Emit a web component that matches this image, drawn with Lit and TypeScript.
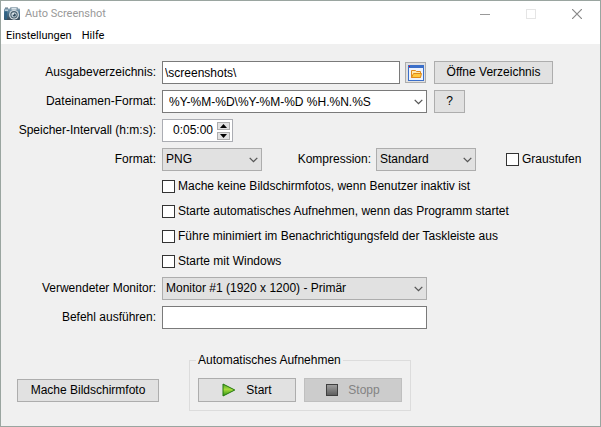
import { LitElement, html, css } from "lit";
import { customElement, state } from "lit/decorators.js";

const chevron = html`<svg class="chevron" width="9" height="6" viewBox="0 0 9 6" aria-hidden="true">
  <path d="M0.7 0.9 4.5 4.6 8.3 0.9" fill="none" stroke="#555" stroke-width="1.3" />
</svg>`;

const camera = html`<svg width="16" height="14" viewBox="0 0 16 14" aria-hidden="true">
  <defs>
    <linearGradient id="body" x1="0" y1="0" x2="0" y2="1">
      <stop offset="0" stop-color="#8fa9ba" />
      <stop offset="0.35" stop-color="#4c7691" />
      <stop offset="1" stop-color="#3a4b58" />
    </linearGradient>
  </defs>
  <rect x="1" y="0.5" width="3" height="2" fill="#5b6f7c" />
  <rect x="0" y="1.5" width="16" height="11.5" rx="0.8" fill="url(#body)" />
  <rect x="6" y="0.3" width="8" height="3" rx="0.8" fill="#8499a6" />
  <rect x="7.5" y="1" width="5" height="1.6" fill="#d9e4ea" />
  <rect x="1" y="2.6" width="3" height="1.4" fill="#b9cbd6" />
  <rect x="0.5" y="4.5" width="2.5" height="8" fill="#2f6285" />
  <circle cx="10" cy="7.8" r="4.9" fill="#d5dde2" />
  <circle cx="10" cy="7.8" r="3.7" fill="#49616f" />
  <circle cx="10" cy="7.8" r="2.6" fill="#c4d3dc" />
  <circle cx="10.3" cy="8" r="1.6" fill="#2e4a5c" />
  <circle cx="9.3" cy="7" r="0.8" fill="#fff" />
</svg>`;

const folder = html`<svg width="16" height="16" viewBox="0 0 16 16" aria-hidden="true">
  <rect width="16" height="16" fill="#3b6fc9" />
  <rect x="1" y="3" width="14" height="12" fill="#edf3fd" />
  <rect x="1" y="1" width="1" height="1" fill="#f00" />
  <path d="M3.5 12.5V5.5H7.5L8.5 6.5H12.5V12.5Z" fill="#ffe9ae" stroke="#e08a1c" />
  <path d="M3.5 12.5 5.5 8.5H13.5L12.5 12.5Z" fill="#ffc840" stroke="#e08a1c" />
</svg>`;

const play = html`<svg width="14" height="14" viewBox="0 0 14 14" aria-hidden="true">
  <defs>
    <linearGradient id="green" x1="0" y1="0" x2="0" y2="1">
      <stop offset="0" stop-color="#4fa52a" />
      <stop offset="0.45" stop-color="#a6dc3c" />
      <stop offset="1" stop-color="#2f9413" />
    </linearGradient>
  </defs>
  <path d="M1 1 12.8 7 1 13Z" fill="url(#green)" stroke="#23780f" />
</svg>`;

const stop = html`<svg width="12" height="12" viewBox="0 0 12 12" aria-hidden="true">
  <defs>
    <linearGradient id="grey" x1="0" y1="0" x2="0" y2="1">
      <stop offset="0" stop-color="#a0a0a0" />
      <stop offset="1" stop-color="#5c5c5c" />
    </linearGradient>
  </defs>
  <rect x="0.5" y="0.5" width="11" height="11" fill="url(#grey)" stroke="#3f3f3f" />
</svg>`;

@customElement("app-root")
export class AppRoot extends LitElement {
  @state() private minutes = 5;

  static styles = css`
    :host {
      display: block;
      font: 12px/15px "Liberation Sans", Arial, sans-serif;
      color: #000;
    }
    * {
      box-sizing: border-box;
    }
    .window {
      display: flex;
      flex-direction: column;
      min-height: 100vh;
      border: 1px solid #9aa5a0;
      background: #f0f0f0;
    }
    .titlebar {
      display: flex;
      align-items: center;
      height: 25px;
      padding-left: 3px;
      background: #fff;
      color: #999;
    }
    .title {
      flex: 1;
      margin: 0 0 0 5px;
      font: 11px/16px Roboto, "Open Sans", sans-serif;
    }
    .caption {
      display: grid;
      place-items: center;
      width: 46px;
      height: 25px;
      padding: 0;
      border: 0;
      background: none;
    }
    .menu {
      display: flex;
      gap: 10px;
      height: 18px;
      padding: 1px 0 0 5px;
      background: #fff;
    }
    .menu button {
      padding: 0;
      border: 0;
      background: none;
      color: #000;
      font: 11px/17px Roboto, "Open Sans", sans-serif;
    }
    .form {
      display: grid;
      grid-template-columns: 155px minmax(0, 1fr) 149px;
      align-items: center;
      gap: 6px;
      padding: 17px 18px 0 0;
    }
    .label {
      text-align: right;
    }
    .span {
      grid-column: 2 / 4;
    }
    .line {
      display: flex;
      align-items: center;
    }
    .path {
      gap: 5px;
      padding-right: 1px;
    }
    .path .text {
      flex: 1;
      min-width: 0;
      padding: 0 2px;
    }
    .text,
    select,
    .button {
      height: 23px;
      border: 1px solid #adadad;
      border-radius: 0;
      font: inherit;
      color: #000;
    }
    .text {
      display: block;
      width: 100%;
      padding: 0 6px;
      border-color: #7a7a7a;
      background: #fff;
    }
    .button {
      display: inline-flex;
      align-items: center;
      justify-content: center;
      padding: 0 11px;
      background: #e1e1e1;
      white-space: nowrap;
    }
    .browse {
      width: 21px;
      height: 21px;
      padding: 0;
    }
    .side {
      justify-self: start;
      margin-left: 1px;
    }
    .open {
      width: 119px;
    }
    .help {
      width: 31px;
    }
    .combo {
      position: relative;
    }
    .combo .chevron {
      position: absolute;
      right: 4px;
      top: 9px;
      pointer-events: none;
    }
    select {
      display: block;
      width: 100%;
      padding: 0 20px 0 3px;
      appearance: none;
      background: #e1e1e1;
    }
    .short {
      flex: none;
      width: 100px;
    }
    .spin {
      display: flex;
      align-items: center;
      width: 71px;
      height: 23px;
      padding-right: 2px;
      border: 1px solid #abadb3;
      background: #fff;
    }
    .spin input {
      flex: 1;
      min-width: 0;
      padding: 0 4px 0 0;
      border: 0;
      background: none;
      font: inherit;
      text-align: right;
    }
    .steps {
      display: grid;
      gap: 2px;
    }
    .steps button {
      display: grid;
      place-items: center;
      width: 13px;
      height: 8px;
      padding: 0;
      border: 1px solid #adadad;
      background: #e1e1e1;
    }
    .compression {
      flex: none;
      width: 109px;
      margin-right: 5px;
      text-align: right;
    }
    .grey {
      margin-left: 30px;
    }
    .check {
      display: inline-flex;
      align-items: center;
      gap: 3px;
      white-space: nowrap;
    }
    .check input {
      width: 13px;
      height: 13px;
      margin: 0;
      appearance: none;
      border: 1px solid #333;
      background: #fff;
    }
    .check input:checked {
      background: #333;
      box-shadow: inset 0 0 0 2px #fff;
    }
    .options {
      display: grid;
      justify-items: start;
      gap: 10px;
      padding: 2px 0;
    }
    .actions {
      display: flex;
      align-items: flex-end;
      gap: 30px;
      padding: 24px 16px 15px;
    }
    .shot {
      width: 142px;
      margin-bottom: 9px;
    }
    fieldset {
      display: flex;
      gap: 8px;
      margin: 0;
      padding: 10px 8px 8px;
      border: 1px solid #dcdcdc;
    }
    legend {
      padding: 0 2px;
      margin-left: -2px;
    }
    fieldset .button {
      width: 98px;
      height: 24px;
      gap: 10px;
    }
    .button:disabled {
      border-color: #bfbfbf;
      background: #ccc;
      color: #838383;
    }
  `;

  private step(by: number) {
    this.minutes = Math.min(59, Math.max(0, this.minutes + by));
  }

  private check(text: string) {
    return html`<label class="check"><input type="checkbox" />${text}</label>`;
  }

  render() {
    const interval = `0:${String(this.minutes).padStart(2, "0")}:00`;
    return html`
      <div class="window">
        <header class="titlebar">
          ${camera}
          <h1 class="title">Auto Screenshot</h1>
          <button class="caption" aria-label="Minimieren">
            <svg width="10" height="10"><path d="M0 5.5H10" stroke="#999" /></svg>
          </button>
          <button class="caption" aria-label="Maximieren" disabled>
            <svg width="10" height="10"><rect x="0.5" y="0.5" width="9" height="9" fill="none" stroke="#e5e5e5" /></svg>
          </button>
          <button class="caption" aria-label="Schließen">
            <svg width="10" height="10"><path d="M0 0 10 10M10 0 0 10" stroke="#888" stroke-width="1.2" /></svg>
          </button>
        </header>
        <nav class="menu">
          <button>Einstellungen</button>
          <button>Hilfe</button>
        </nav>

        <main class="form">
          <label class="label" for="dir">Ausgabeverzeichnis:</label>
          <div class="line path">
            <input class="text" id="dir" type="text" value="\\screenshots\\" />
            <button class="button browse" aria-label="Durchsuchen">${folder}</button>
          </div>
          <button class="button side open">Öffne Verzeichnis</button>

          <label class="label" for="name">Dateinamen-Format:</label>
          <div class="combo">
            <input class="text" id="name" type="text" role="combobox" value="%Y-%M-%D\\%Y-%M-%D %H.%N.%S" />
            ${chevron}
          </div>
          <button class="button side help">?</button>

          <label class="label" for="interval">Speicher-Intervall (h:m:s):</label>
          <div class="span">
            <div class="spin">
              <input id="interval" type="text" .value=${interval} />
              <div class="steps">
                <button aria-label="Mehr" @click=${() => this.step(1)}>
                  <svg width="7" height="4"><path d="M0 4 3.5 0 7 4Z" /></svg>
                </button>
                <button aria-label="Weniger" @click=${() => this.step(-1)}>
                  <svg width="7" height="4"><path d="M0 0 3.5 4 7 0Z" /></svg>
                </button>
              </div>
            </div>
          </div>

          <label class="label" for="format">Format:</label>
          <div class="line span">
            <div class="combo short">
              <select id="format"><option>PNG</option></select>
              ${chevron}
            </div>
            <label class="compression" for="compression">Kompression:</label>
            <div class="combo short">
              <select id="compression"><option>Standard</option></select>
              ${chevron}
            </div>
            <div class="line grey">${this.check("Graustufen")}</div>
          </div>

          <div class="span options">
            ${this.check("Mache keine Bildschirmfotos, wenn Benutzer inaktiv ist")}
            ${this.check("Starte automatisches Aufnehmen, wenn das Programm startet")}
            ${this.check("Führe minimiert im Benachrichtigungsfeld der Taskleiste aus")}
            ${this.check("Starte mit Windows")}
          </div>

          <label class="label" for="monitor">Verwendeter Monitor:</label>
          <div class="combo">
            <select id="monitor"><option>Monitor #1 (1920 x 1200) - Primär</option></select>
            ${chevron}
          </div>
          <span></span>

          <label class="label" for="command">Befehl ausführen:</label>
          <input class="text" id="command" type="text" />
        </main>

        <footer class="actions">
          <button class="button shot">Mache Bildschirmfoto</button>
          <fieldset>
            <legend>Automatisches Aufnehmen</legend>
            <button class="button">${play}Start</button>
            <button class="button" disabled>${stop}Stopp</button>
          </fieldset>
        </footer>
      </div>
    `;
  }
}
